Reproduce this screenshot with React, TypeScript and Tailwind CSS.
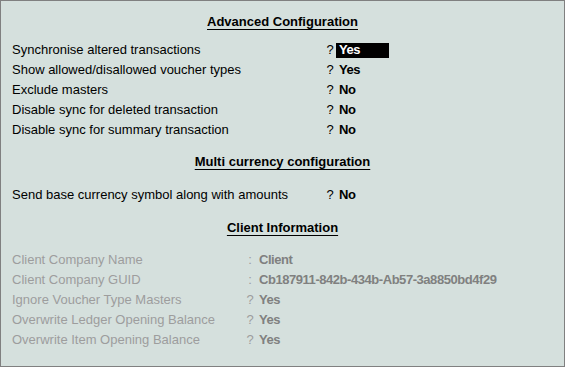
import React from 'react';

type Row = { label: string; sign: string; value: string; active?: boolean };

const advanced: Row[] = [
  { label: 'Synchronise altered transactions', sign: '?', value: 'Yes', active: true },
  { label: 'Show allowed/disallowed voucher types', sign: '?', value: 'Yes' },
  { label: 'Exclude masters', sign: '?', value: 'No' },
  { label: 'Disable sync for deleted transaction', sign: '?', value: 'No' },
  { label: 'Disable sync for summary transaction', sign: '?', value: 'No' },
];

const client: Row[] = [
  { label: 'Client Company Name', sign: ':', value: 'Client' },
  { label: 'Client Company GUID', sign: ':', value: 'Cb187911-842b-434b-Ab57-3a8850bd4f29' },
  { label: 'Ignore Voucher Type Masters', sign: '?', value: 'Yes' },
  { label: 'Overwrite Ledger Opening Balance', sign: '?', value: 'Yes' },
  { label: 'Overwrite Item Opening Balance', sign: '?', value: 'Yes' },
];

function Heading({ children }: { children: React.ReactNode }) {
  return (
    <div className="h-5 text-center font-bold leading-5 underline underline-offset-[3px]">
      {children}
    </div>
  );
}

function FieldRow({ row }: { row: Row }) {
  return (
    <div className="flex h-5 items-center leading-5">
      <span className="w-[312px] shrink-0">{row.label}</span>
      <span className="w-3 shrink-0 text-center">{row.sign}</span>
      {row.active ? (
        <span className="flex h-[15px] w-[53px] items-center bg-black pl-[3px] font-bold tracking-[-0.45px] text-white">
          {row.value}
        </span>
      ) : (
        <span className="pl-[3px] font-bold tracking-[-0.45px]">{row.value}</span>
      )}
    </div>
  );
}

function ClientRow({ row }: { row: Row }) {
  return (
    <div className="flex h-5 items-center leading-5">
      <span className="w-[232px] shrink-0 text-[#9d9d9d]">{row.label}</span>
      <span className="w-3 shrink-0 text-center text-[#9d9d9d]">{row.sign}</span>
      <span className="pl-[3px] font-bold tracking-[-0.45px] text-[#808080]">{row.value}</span>
    </div>
  );
}

export default function App() {
  return (
    <div
      className="h-[367px] w-[565px] border border-[#808080] bg-[#d5e0dd] pl-[11px] pt-[11px] text-[13px] text-black"
      style={{ fontFamily: '"Liberation Sans", Arial, sans-serif' }}
    >
      <div className="pr-[11px]">
        <Heading>Advanced Configuration</Heading>
      </div>
      <div className="mt-2 flex flex-col">
        {advanced.map((r) => (
          <FieldRow key={r.label} row={r} />
        ))}
      </div>
      <div className="mt-3 pr-[11px]">
        <Heading>Multi currency configuration</Heading>
      </div>
      <div className="mt-[13px]">
        <FieldRow row={{ label: 'Send base currency symbol along with amounts', sign: '?', value: 'No' }} />
      </div>
      <div className="mt-[13px] pr-[11px]">
        <Heading>Client Information</Heading>
      </div>
      <div className="mt-3 flex flex-col">
        {client.map((r) => (
          <ClientRow key={r.label} row={r} />
        ))}
      </div>
    </div>
  );
}
